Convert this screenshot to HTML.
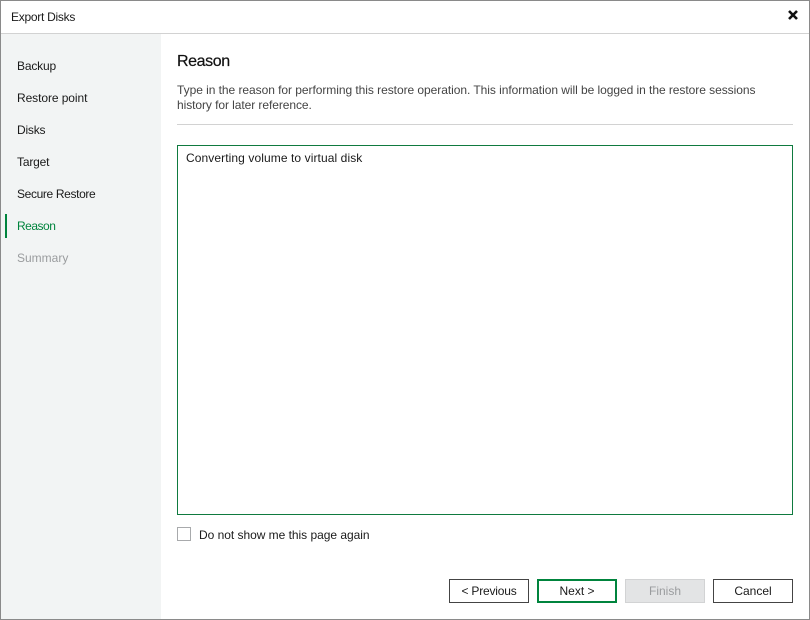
<!DOCTYPE html>
<html><head><meta charset="utf-8"><style>
html,body{margin:0;padding:0;background:#fff}
#p{position:relative;width:810px;height:620px;overflow:hidden;background:#fff;font-family:"Liberation Sans",sans-serif;font-size:12px;color:#1a1a1a}
#p div{position:absolute;box-sizing:border-box}
.t{white-space:nowrap;line-height:16px}
.b{height:24px;width:80px;top:579px;background:#fff;border:1px solid #444;text-align:center;line-height:22px;white-space:nowrap}
</style></head><body><div id="p">
<div style="left:0;top:0;width:810px;height:620px;border:1px solid #8a8a8a"></div>
<div style="left:1px;top:33px;width:808px;height:1px;background:#d2d2d2"></div>
<div style="left:1px;top:34px;width:160px;height:585px;background:#f2f4f4"></div>
<div class="t" style="left:11px;top:9px;letter-spacing:-.27px">Export Disks</div>
<svg style="position:absolute;left:787px;top:9px" width="12" height="12" viewBox="0 0 12 12"><path d="M2 2L10 10M10 2L2 10" stroke="#111" stroke-width="2.6" fill="none"/></svg>
<div class="t" style="left:17px;top:58px;letter-spacing:-.17px">Backup</div>
<div class="t" style="left:17px;top:90px;letter-spacing:-.08px">Restore point</div>
<div class="t" style="left:17px;top:122px;letter-spacing:-.2px">Disks</div>
<div class="t" style="left:17px;top:154px;letter-spacing:-.17px">Target</div>
<div class="t" style="left:17px;top:186px;letter-spacing:-.36px">Secure Restore</div>
<div style="left:5px;top:214px;width:2px;height:24px;background:#00843d"></div>
<div class="t" style="left:17px;top:218px;color:#00843d;letter-spacing:-.5px">Reason</div>
<div class="t" style="left:17px;top:250px;color:#9a9c9e">Summary</div>
<div class="t" style="left:177px;top:53px;font-size:16px;line-height:18px;color:#111;-webkit-text-stroke:.2px #111;letter-spacing:-.4px">Reason</div>
<div class="t" style="left:177px;top:82px;color:#444;letter-spacing:-.05px">Type in the reason for performing this restore operation. This information will be logged in the restore sessions</div>
<div class="t" style="left:177px;top:97px;color:#444;letter-spacing:-.07px">history for later reference.</div>
<div style="left:177px;top:124px;width:616px;height:1px;background:#d2d2d2"></div>
<div style="left:177px;top:145px;width:616px;height:370px;border:1px solid #0f7a3f"></div>
<div class="t" style="left:186px;top:150px;letter-spacing:.09px">Converting volume to virtual disk</div>
<div style="left:177px;top:527px;width:14px;height:14px;background:#fff;border:1px solid #a8aaac"></div>
<div class="t" style="left:199px;top:527px;letter-spacing:-.03px">Do not show me this page again</div>
<div class="b" style="left:449px;letter-spacing:-.2px">&lt; Previous</div>
<div class="b" style="left:537px;border:2px solid #00843d;line-height:20px">Next &gt;</div>
<div class="b" style="left:625px;background:#e3e4e5;border-color:#d2d3d4;color:#9a9c9e">Finish</div>
<div class="b" style="left:713px">Cancel</div>
</div></body></html>
